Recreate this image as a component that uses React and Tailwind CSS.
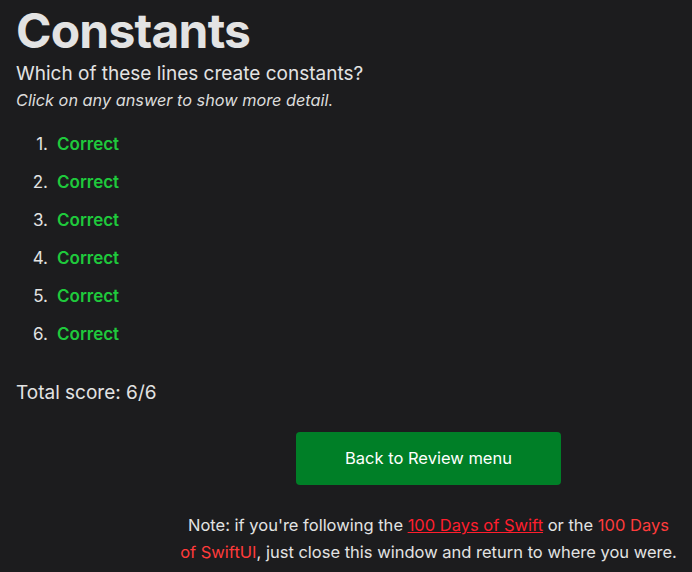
import React from 'react';

const answers = [1, 2, 3, 4, 5, 6];

export default function App() {
  return (
    <div className="min-h-[572px] bg-[#1c1c1e] text-[#e3e3e3] px-4 font-['Inter',sans-serif]">
      <h1 className="text-[48px] font-bold leading-[54px] pt-[4px] tracking-[-0.8px]">Constants</h1>
      <p className="text-[19px] leading-[26px] mt-[3px]">Which of these lines create constants?</p>
      <p className="text-[16.3px] italic leading-[26px] text-[#dcdcdc]">Click on any answer to show more detail.</p>

      <ol className="mt-[19px] pl-[12px]">
        {answers.map((n) => (
          <li key={n} className="flex h-[38px] text-[17px] leading-[24px]">
            <span className="w-[20px] text-right">{n}.</span>
            <span className="ml-[9px] font-semibold text-[#1fc93c]">Correct</span>
          </li>
        ))}
      </ol>

      <p className="mt-[20px] text-[19px] leading-[26px]">Total score: 6/6</p>

      <div className="mt-[26px] ml-auto mr-[-2px] w-[499px] flex flex-col items-center">
        <button className="w-[265px] h-[53px] rounded-[4px] bg-[#007f27] text-white text-[16.5px]">
          Back to Review menu
        </button>
        <p className="mt-[27px] text-center text-[16.5px] leading-[27px]">
          Note: if you're following the{' '}
          <a className="text-[#ff1e2d] underline">100 Days of Swift</a> or the{' '}
          <a className="text-[#ff3b3b]">100 Days of SwiftUI</a>, just close this window and return to where you were.
        </p>
      </div>
    </div>
  );
}
